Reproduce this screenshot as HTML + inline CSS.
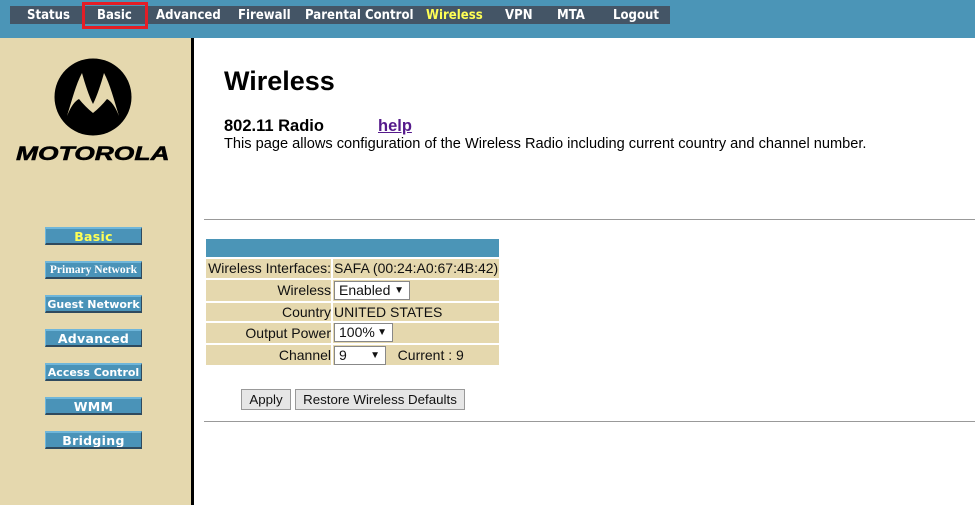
<!DOCTYPE html>
<html><head><meta charset="utf-8"><style>
*{margin:0;padding:0;box-sizing:border-box}
body{width:975px;height:505px;overflow:hidden;background:#fff;font-family:"Liberation Sans",Arial,sans-serif;position:relative}
.top{position:absolute;left:0;top:0;width:975px;height:38px;background:#4b95b7}
.nav{position:absolute;left:10px;top:6px;width:660px;height:18px;background:#445566}
.nav span{position:absolute;top:1px;color:#fff;font-family:"DejaVu Sans",sans-serif;font-size:13.5px;font-weight:bold;transform:scaleX(0.87);transform-origin:left top;white-space:nowrap}
.sel{position:absolute;left:82px;top:2px;width:66px;height:27px;border:3px solid #e41e26}
.side{position:absolute;left:0;top:38px;width:191px;height:467px;background:#e5d8ae}
.bar{position:absolute;left:191px;top:38px;width:3px;height:467px;background:#000}
.btn{position:absolute;left:45px;width:97px;height:18px;background:#4a93b8;border-top:2px solid #6fb6da;border-left:1px solid #6fb6da;border-bottom:2px solid #2f4a5e;border-right:1px solid #2f4a5e;color:#fff;font-family:"DejaVu Sans",sans-serif;font-size:12.5px;font-weight:bold;text-align:center;line-height:15px;white-space:nowrap;overflow:hidden;letter-spacing:0.3px}
h1{position:absolute;left:224px;top:66px;font-size:27px;font-weight:bold}
.sub{position:absolute;left:224px;top:117px;font-size:16.5px;font-weight:bold}
.help{position:absolute;left:378px;top:117px;font-size:16.5px;font-weight:bold;color:#551a8b;text-decoration:underline}
.desc{position:absolute;left:224px;top:136px;font-size:14.6px}
.hr{position:absolute;left:204px;width:771px;height:1px;background:#999}
.cell{position:absolute;background:#e5d8ae;font-size:14px;line-height:19px;color:#111;white-space:nowrap}
.lab{left:206px;width:125px;text-align:right}
.val{left:333px;width:166px;padding-left:1px}
.s{display:inline-block;height:19px;border:1px solid #888;background:#fff;font-size:14px;line-height:17px;padding-left:4px;vertical-align:top;position:relative}
.s i{position:absolute;right:5px;top:0;font-style:normal;font-size:10px}
.b{position:absolute;top:389px;height:21px;border:1px solid #999;background:#e6e6e6;font-size:13.3px;line-height:19px;text-align:center;color:#111}
</style></head><body>
<div class="top"></div>
<div class="nav">
<span style="left:17px">Status</span>
<span style="left:87px">Basic</span>
<span style="left:146px">Advanced</span>
<span style="left:228px">Firewall</span>
<span style="left:295px">Parental Control</span>
<span style="left:416px;color:#ffff55">Wireless</span>
<span style="left:495px">VPN</span>
<span style="left:547px">MTA</span>
<span style="left:603px">Logout</span>
</div>
<div class="sel"></div>
<div class="side"></div>
<div class="bar"></div>
<svg style="position:absolute;left:54px;top:58px" width="78" height="78" viewBox="0 0 78 78">
<circle cx="39" cy="39" r="38.5" fill="#000"/>
<path d="M13 58 C18 42 22 26 28 15 C31 26 35 38 39 46 C43 38 47 26 50 15 C56 26 60 42 65 58 C61 48 57 43 53 41 C49 46 44 51 39 55 C34 51 29 46 25 41 C21 43 17 48 13 58Z" fill="#e5d8ae"/>
</svg>
<div style="position:absolute;left:16px;top:144px;font-size:19px;font-weight:bold;font-style:italic;color:#000;transform:scaleX(1.39);transform-origin:left top;white-space:nowrap;-webkit-text-stroke:0.5px #000">MOTOROLA</div>
<div class="btn" style="top:227px;color:#ffff55">Basic</div>
<div class="btn" style="top:261px;font-family:'Liberation Serif',serif;font-size:11.5px;letter-spacing:0">Primary Network</div>
<div class="btn" style="top:295px;font-size:11px;letter-spacing:0">Guest Network</div>
<div class="btn" style="top:329px">Advanced</div>
<div class="btn" style="top:363px;font-size:11px;letter-spacing:0">Access Control</div>
<div class="btn" style="top:397px">WMM</div>
<div class="btn" style="top:431px">Bridging</div>
<h1>Wireless</h1>
<div class="sub">802.11 Radio</div>
<div class="help">help</div>
<div class="desc">This page allows configuration of the Wireless Radio including current country and channel number.</div>
<div class="hr" style="top:219px"></div>
<div class="hr" style="top:421px"></div>
<div class="cell" style="left:206px;top:239px;width:293px;height:18px;background:#4b95b7"></div>
<div class="cell lab" style="top:259px;height:19px">Wireless Interfaces:</div>
<div class="cell val" style="top:259px;height:19px">SAFA (00:24:A0:67:4B:42)</div>
<div class="cell lab" style="top:280px;height:21px;line-height:21px">Wireless</div>
<div class="cell val" style="top:280px;height:21px"><span class="s" style="width:76px;margin-top:1px">Enabled<i>▼</i></span></div>
<div class="cell lab" style="top:303px;height:18px">Country</div>
<div class="cell val" style="top:303px;height:18px">UNITED STATES</div>
<div class="cell lab" style="top:323px;height:20px;line-height:20px">Output Power</div>
<div class="cell val" style="top:323px;height:20px"><span class="s" style="width:59px">100%<i>▼</i></span></div>
<div class="cell lab" style="top:345px;height:20px;line-height:20px">Channel</div>
<div class="cell val" style="top:345px;height:20px;line-height:20px"><span class="s" style="width:52px;margin-top:1px;line-height:17px">9<i>▼</i></span>&nbsp;&nbsp; Current : 9</div>
<div class="b" style="left:241px;width:50px">Apply</div>
<div class="b" style="left:295px;width:170px">Restore Wireless Defaults</div>
</body></html>
